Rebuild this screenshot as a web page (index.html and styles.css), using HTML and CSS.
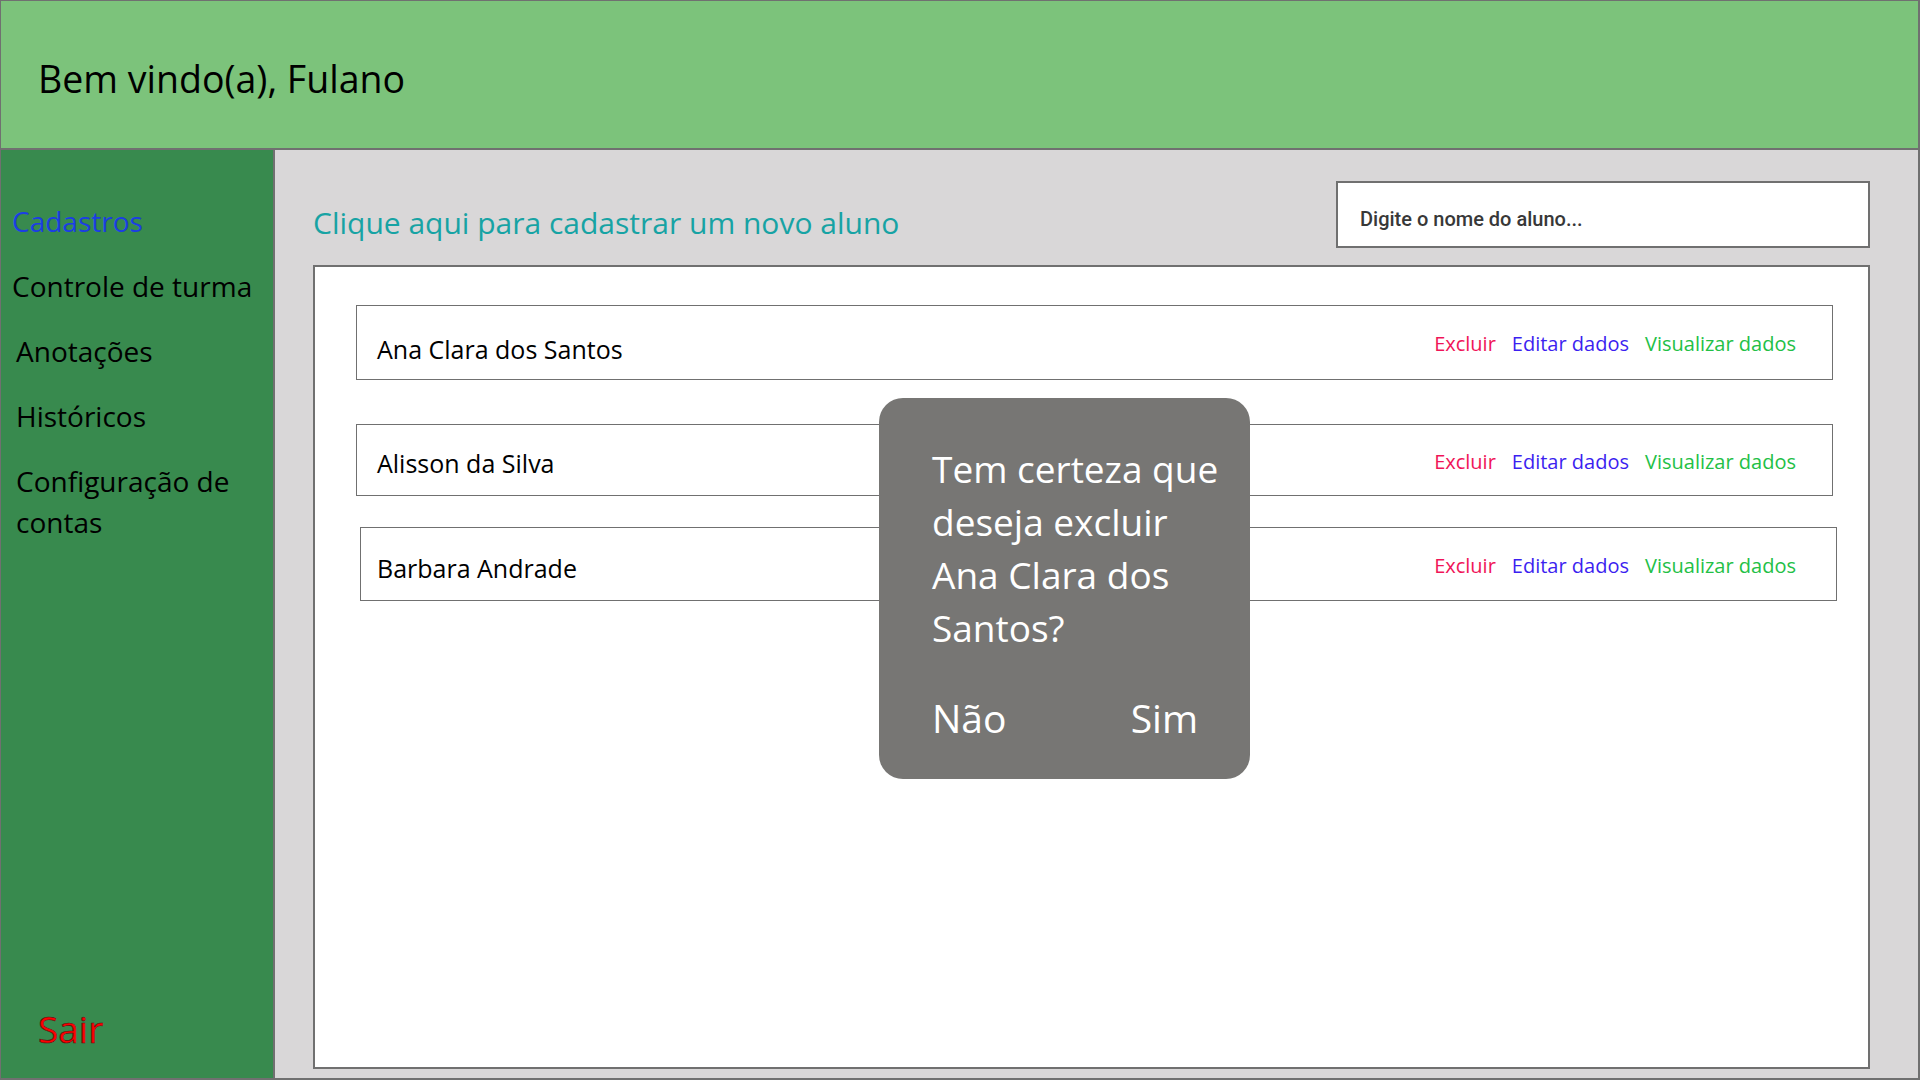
FILE: index.html
```html
<!DOCTYPE html>
<html lang="pt-BR">
<head>
    <meta charset="UTF-8">
    <meta name="viewport" content="width=device-width, initial-scale=1.0">
    <title>Cadastros</title>
    <link rel="stylesheet" href="styles.css">
</head>
<body>
    <div class="app">
        <header class="header">
            <h1>Bem vindo(a), Fulano</h1>
        </header>
        <div class="content">
            <nav class="sidebar">
                <a href="#" class="nav-item active">Cadastros</a>
                <a href="#" class="nav-item">Controle de turma</a>
                <a href="#" class="nav-item indent">Anotações</a>
                <a href="#" class="nav-item indent">Históricos</a>
                <a href="#" class="nav-item indent">Configuração de contas</a>
                <a href="#" class="logout">Sair</a>
            </nav>
            <main class="main">
                <div class="topbar">
                    <a href="#" class="new-student">Clique aqui para cadastrar um novo aluno</a>
                    <input type="text" class="search" placeholder="Digite o nome do aluno...">
                </div>
                <div class="panel">
                    <div class="student">
                        <span class="student-name">Ana Clara dos Santos</span>
                        <div class="actions">
                            <a href="#" class="delete">Excluir</a>
                            <a href="#" class="edit">Editar dados</a>
                            <a href="#" class="view">Visualizar dados</a>
                        </div>
                    </div>
                    <div class="student">
                        <span class="student-name">Alisson da Silva</span>
                        <div class="actions">
                            <a href="#" class="delete">Excluir</a>
                            <a href="#" class="edit">Editar dados</a>
                            <a href="#" class="view">Visualizar dados</a>
                        </div>
                    </div>
                    <div class="student">
                        <span class="student-name">Barbara Andrade</span>
                        <div class="actions">
                            <a href="#" class="delete">Excluir</a>
                            <a href="#" class="edit">Editar dados</a>
                            <a href="#" class="view">Visualizar dados</a>
                        </div>
                    </div>
                </div>
            </main>
        </div>

        <div class="modal">
            <p class="modal-text">Tem certeza que deseja excluir Ana Clara dos Santos?</p>
            <div class="modal-buttons">
                <button type="button">Não</button>
                <button type="button">Sim</button>
            </div>
        </div>
    </div>
</body>
</html>
```

FILE: styles.css
```css
body {
    margin: 0;
    padding: 0;
    font-family: "Open Sans", "Noto Sans", sans-serif;
    color: #000;
}
a {
    text-decoration: none;
}
.app {
    position: relative;
    width: 1920px;
    height: 1080px;
    box-sizing: border-box;
    border: 1px solid #707070;
    border-bottom-width: 2px;
    border-right-width: 2px;
    display: flex;
    flex-direction: column;
}
.header {
    height: 149px;
    flex-shrink: 0;
    background-color: #7cc37b;
    border-bottom: 2px solid #707070;
    display: flex;
    align-items: center;
    padding-left: 37px;
    box-sizing: border-box;
}
.header h1 {
    margin: 0;
    font-size: 37.5px;
    font-weight: 400;
    padding-top: 8px;
}
.content {
    flex: 1;
    display: flex;
    min-height: 0;
}
.sidebar {
    width: 274px;
    flex-shrink: 0;
    background-color: #388a4e;
    border-right: 2px solid #707070;
    display: flex;
    flex-direction: column;
    padding: 51px 0 24px 11px;
    box-sizing: border-box;
}
.nav-item {
    font-size: 28px;
    line-height: 41px;
    color: #000;
    margin-bottom: 24px;
}
.nav-item.indent {
    padding-left: 4px;
}
.nav-item.active {
    color: #1b3ee4;
}
.logout {
    margin-top: auto;
    padding-left: 26px;
    font-size: 37px;
    line-height: 50px;
    color: #ff0000;
    -webkit-text-stroke: 0.6px #5a1010;
}
.main {
    flex: 1;
    background-color: #d9d7d8;
    padding: 31px 48px 9px 38px;
    display: flex;
    flex-direction: column;
    min-width: 0;
}
.topbar {
    display: flex;
    justify-content: space-between;
    align-items: flex-start;
    margin-bottom: 17px;
}
.new-student {
    font-size: 30px;
    color: #17a3a4;
    padding-top: 21px;
}
.search {
    width: 534px;
    height: 67px;
    box-sizing: border-box;
    border: 2px solid #707070;
    background: #fff;
    padding: 8px 22px 0;
    font-family: Roboto, sans-serif;
    font-size: 20px;
    font-weight: 500;
}
.search::placeholder {
    color: #383838;
}
.panel {
    flex: 1;
    background: #fff;
    border: 2px solid #707070;
    padding: 38px 35px 0 41px;
}
.student {
    display: flex;
    justify-content: space-between;
    align-items: center;
    height: 75px;
    box-sizing: border-box;
    border: 1px solid #707070;
    padding: 0 36px 0 20px;
}
.student:nth-child(2) {
    height: 72px;
    margin-top: 44px;
}
.student:nth-child(3) {
    height: 74px;
    margin-top: 31px;
    margin-left: 4px;
    margin-right: -4px;
    padding-left: 16px;
    padding-right: 40px;
}
.student-name {
    font-size: 25px;
    padding-top: 13px;
}
.student:nth-child(2) .student-name {
    padding-top: 6px;
}
.student:nth-child(3) .student-name {
    padding-top: 8px;
}
.actions {
    display: flex;
    gap: 16px;
    font-size: 20px;
    padding-top: 2px;
}
.delete {
    color: #f01458;
}
.edit {
    color: #3c1ff0;
}
.view {
    color: #23c046;
}
.modal {
    position: absolute;
    left: 878px;
    top: 397px;
    width: 371px;
    height: 381px;
    box-sizing: border-box;
    background-color: #777674;
    border-radius: 24px;
    padding: 44px 16px 0 53px;
    color: #fff;
}
.modal-text {
    margin: 0;
    font-size: 37px;
    line-height: 53px;
}
.modal-buttons {
    display: flex;
    justify-content: space-between;
    margin-top: 37px;
    padding-right: 36px;
}
.modal-buttons button {
    background: none;
    border: none;
    padding: 0;
    color: #fff;
    font-family: "Open Sans", "Noto Sans", sans-serif;
    font-size: 39px;
    line-height: 53px;
    cursor: pointer;
}
```
